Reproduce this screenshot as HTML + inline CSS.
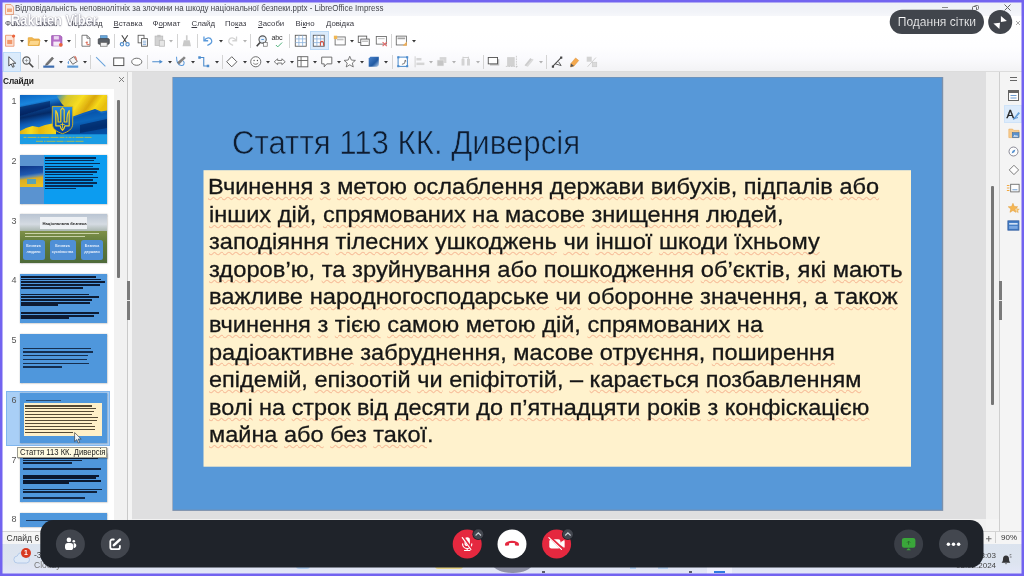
<!DOCTYPE html>
<html lang="uk"><head><meta charset="utf-8"><title>screen</title>
<style>
html,body{margin:0;padding:0;}
body{width:1024px;height:576px;overflow:hidden;background:#fff;font-family:"Liberation Sans",sans-serif;position:relative;}
#root{position:absolute;left:0;top:0;width:1024px;height:576px;overflow:hidden;background:#fbfbfd;}
#app{position:absolute;left:0;top:0;width:1024px;height:576px;filter:blur(.4px);background:#fbfbfd;}
#ov{position:absolute;left:0;top:0;width:1024px;height:576px;filter:blur(.15px);}
.abs{position:absolute;}
.ic{position:absolute;overflow:visible;}
#app .ic{opacity:.9;}
.sep{position:absolute;width:1px;height:14px;background:#d4d4d4;}
.hl{position:absolute;background:#dbebfb;border:1px solid #bcdaf6;box-sizing:border-box;}
.abc{position:absolute;font-size:7.200px;color:#333;letter-spacing:-.2px;}
#titlebar{left:0;top:0;width:1024px;height:15.600px;background:linear-gradient(#eef0f8,#f1f3f8 70%,#f6f7fb);}
#ttext{left:14.600px;top:3.700px;font-size:8.200px;color:#44464e;white-space:nowrap;transform-origin:0 0;transform:scaleX(0.9718);}
#menubar{left:0;top:15.600px;width:1024px;height:14.400px;background:#fff;}
.mi{position:absolute;top:19px;font-size:7.800px;color:#3a3a42;white-space:nowrap;}
#tbars{left:0;top:30px;width:1024px;height:40.500px;background:linear-gradient(#fff,#fefeff 40%,#fafafd 70%,#f3f3f5);}
#tbline{left:0;top:70.500px;width:1024px;height:1px;background:#dcdcdc;}
#work{left:132px;top:71.500px;width:854px;height:447px;background:#dfdfe0;}
#panelhead{left:0;top:71.500px;width:127px;height:17px;background:#f1f1f1;}
#panel{left:0;top:88.500px;width:114px;height:441.500px;background:#fff;}
#panelsb{left:114px;top:88.500px;width:13px;height:442px;background:#f1f1f1;}
#split{left:127px;top:71.500px;width:5px;height:459px;background:#f4f4f4;border-left:1px solid #c9c9c9;box-sizing:border-box;}
#slide{left:172.700px;top:77.300px;width:770.300px;height:433px;background:#5798d8;box-shadow:0 0 0 .5px #8a8a8a;}
#tbox{left:203.400px;top:170.300px;width:707.600px;height:296.400px;background:#fff2cd;}
.bl{position:absolute;left:209.8px;font-size:22.8px;line-height:1;color:#161616;white-space:nowrap;transform-origin:0 0;-webkit-text-stroke:.3px #161616;}
.bl u{text-decoration:underline wavy rgba(230,80,50,.32);text-decoration-thickness:.5px;text-underline-offset:2.200px;text-decoration-skip-ink:none;}
#ttl{color:#0e1c30 !important;left:232.37px;top:126.77px;font-size:32.400px;line-height:1;color:#15253a;white-space:nowrap;transform-origin:0 0;transform:scaleX(0.9627);-webkit-text-stroke:.55px #5899d8;}
.tn{position:absolute;left:19.500px;width:87px;height:49.300px;background:#4f97dc;box-shadow:0 0 1.500px .5px rgba(60,60,60,.55);overflow:hidden;}
.num{position:absolute;left:5px;width:11.500px;text-align:right;font-size:9px;color:#555;}
.tl{position:absolute;background:#10203a;opacity:.8;height:1px;}
#status{left:0;top:530.500px;width:1024px;height:13.500px;background:#f5f5f5;}
#hsb{left:132px;top:518.500px;width:867px;height:12px;background:#f1f1f1;}
#task{left:0;top:544px;width:1024px;height:32px;background:linear-gradient(#dbe3ee,#dde4f0 60%,#e4e7fa);}
#side{left:986px;top:71.500px;width:38px;height:459px;background:#f4f4f4;}
#bar{left:40.300px;top:520px;width:943.300px;height:47.700px;background:#1f232a;border-radius:14px;}
.cb{position:absolute;border-radius:50%;width:29px;height:29px;}
#pill{left:889.700px;top:9.700px;width:94.300px;height:24.300px;color:#fff;font-size:12.050px;line-height:24.300px;-webkit-text-stroke:.2px #41454c;text-align:center;white-space:nowrap;}
</style></head><body>
<div id="root">
<div id="app">
<div class="abs" id="titlebar"></div>
<div class="abs" id="menubar"></div>
<div class="abs" id="tbars"></div>
<div class="abs" id="tbline"></div>
<svg class="ic" style="left:5px;top:4px;width:9px;height:11px" viewBox="0 0 9 11"><path d="M.5.500h5.500l2.500 2.500v7.500h-8z" fill="#fde9dc" stroke="#e58a5e" stroke-width=".8"/><rect x="2" y="4.500" width="5" height="3.500" fill="#f2a071"/></svg>
<div class="abs" id="ttext">Відповідальність неповнолітніх за злочини на шкоду національної безпеки.pptx - LibreOffice Impress</div>
<div class="mi" style="left:5px">Файл</div>
<div class="mi" style="left:37px">Зміни</div>
<div class="mi" style="left:68px">Перегляд</div>
<div class="mi" style="left:113.500px"><u>В</u>ставка</div>
<div class="mi" style="left:152.500px">Ф<u>о</u>рмат</div>
<div class="mi" style="left:191.500px"><u>С</u>лайд</div>
<div class="mi" style="left:225px">По<u>к</u>аз</div>
<div class="mi" style="left:258px"><u>З</u>асоби</div>
<div class="mi" style="left:295.500px">Ві<u>к</u>но</div>
<div class="mi" style="left:326px"><u>Д</u>овідка</div>

<svg class="ic" style="left:3.2px;top:33.8px;width:13.5px;height:13.5px" viewBox="0 0 16 16" ><path d="M3 1.5h7l3 3v10H3z" fill="#fbe3d6" stroke="#e8855a"/><rect x="5" y="7" width="6" height="5" fill="#f08c5a"/><circle cx="12.5" cy="2.5" r="2" fill="#e8552a"/></svg>
<svg class="ic" style="left:20.0px;top:39.7px;width:4px;height:2.500px" viewBox="0 0 5 3"><path d="M0 0h5L2.5 3z" fill="#222"/></svg>
<svg class="ic" style="left:27.2px;top:33.8px;width:13.5px;height:13.5px" viewBox="0 0 16 16" ><path d="M1.5 4.5h5l1.5 1.5h6.5v7.5h-13z" fill="#f5b544" stroke="#e09a22"/><path d="M1.5 13.5l2-6h12l-2 6z" fill="#fcd382" stroke="#e09a22" stroke-width=".8"/></svg>
<svg class="ic" style="left:44.0px;top:39.7px;width:4px;height:2.500px" viewBox="0 0 5 3"><path d="M0 0h5L2.5 3z" fill="#222"/></svg>
<svg class="ic" style="left:50.2px;top:33.8px;width:13.5px;height:13.5px" viewBox="0 0 16 16" ><path d="M2 2h10.5L14 3.5V14H2z" fill="#b05fc4" stroke="#8e3fa6"/><rect x="4.5" y="2.5" width="6" height="4" fill="#e9d3f0"/><rect x="4" y="9" width="8" height="5" fill="#f3e8f7"/><circle cx="12.8" cy="12.8" r="2.2" fill="#e8552a"/></svg>
<svg class="ic" style="left:67.0px;top:39.7px;width:4px;height:2.500px" viewBox="0 0 5 3"><path d="M0 0h5L2.5 3z" fill="#222"/></svg>
<div class="sep" style="left:75.0px;top:33.5px"></div>
<svg class="ic" style="left:79.2px;top:33.8px;width:13.5px;height:13.5px" viewBox="0 0 16 16" ><path d="M3.5 1.5h6l3.5 3.5v9.5h-9.500z" fill="#fff" stroke="#555"/><path d="M9.5 1.500v3.500h3.500" fill="none" stroke="#555"/><path d="M8 10.500c1.500-2 2.500-1 1.500 0.500s1.500 2.500 3 1" stroke="#d8604a" fill="none" stroke-width="1.200"/></svg>
<svg class="ic" style="left:97.2px;top:33.8px;width:13.5px;height:13.5px" viewBox="0 0 16 16" ><rect x="4" y="2" width="8" height="4" fill="#5aa0d8" stroke="#3a70a8" stroke-width=".8"/><rect x="1.500" y="5.500" width="13" height="6.500" rx="1" fill="#4a4f57" stroke="#2e3238"/><rect x="4" y="10" width="8" height="4.500" fill="#f0f0f0" stroke="#555" stroke-width=".8"/></svg>
<div class="sep" style="left:114.0px;top:33.5px"></div>
<svg class="ic" style="left:118.2px;top:33.8px;width:13.5px;height:13.5px" viewBox="0 0 16 16" ><path d="M4.500 1.500L10 10M11.500 1.500L6 10" stroke="#333" stroke-width="1.300" fill="none"/><circle cx="4.700" cy="12.200" r="2" fill="none" stroke="#3c7fc4" stroke-width="1.300"/><circle cx="11.300" cy="12.200" r="2" fill="none" stroke="#3c7fc4" stroke-width="1.300"/></svg>
<svg class="ic" style="left:136.2px;top:33.8px;width:13.5px;height:13.5px" viewBox="0 0 16 16" ><rect x="2.500" y="1.500" width="7" height="9" fill="#fff" stroke="#444"/><rect x="6.500" y="5.500" width="7" height="9" fill="#fff" stroke="#444"/><path d="M8 8.500h4M8 10.500h4M8 12.500h4" stroke="#4a86c8" stroke-width=".8"/></svg>
<svg class="ic" style="left:153.2px;top:33.8px;width:13.5px;height:13.5px" viewBox="0 0 16 16" ><rect x="2.500" y="2.500" width="9" height="11" fill="#cfcfcf" stroke="#b5b5b5"/><rect x="5" y="1" width="4" height="3" fill="#bdbdbd"/><rect x="7.500" y="7.500" width="6" height="7" fill="#e4e4e4" stroke="#b5b5b5"/></svg>
<svg class="ic" style="left:169.0px;top:39.7px;width:4px;height:2.500px" viewBox="0 0 5 3"><path d="M0 0h5L2.5 3z" fill="#aaa"/></svg>
<div class="sep" style="left:177.0px;top:33.5px"></div>
<svg class="ic" style="left:180.2px;top:33.8px;width:13.5px;height:13.5px" viewBox="0 0 16 16" ><path d="M7 1.500h2v6h-2z" fill="#c8c8c8"/><path d="M4.500 7.500h7l1.500 7h-10z" fill="#c4c4c4"/></svg>
<div class="sep" style="left:197.0px;top:33.5px"></div>
<svg class="ic" style="left:201.2px;top:33.8px;width:13.5px;height:13.5px" viewBox="0 0 16 16" ><path d="M3.500 3v5h5" fill="none" stroke="#4a90d8" stroke-width="1.500"/><path d="M3.800 7.800C6 4 11 3.500 12.500 7c1.200 3-1.500 5.500-5 6.500" fill="none" stroke="#4a90d8" stroke-width="1.500"/></svg>
<svg class="ic" style="left:219.0px;top:39.7px;width:4px;height:2.500px" viewBox="0 0 5 3"><path d="M0 0h5L2.5 3z" fill="#222"/></svg>
<svg class="ic" style="left:226.2px;top:33.8px;width:13.5px;height:13.5px" viewBox="0 0 16 16" ><path d="M12.500 3v5h-5" fill="none" stroke="#cfcfcf" stroke-width="1.500"/><path d="M12.200 7.800C10 4 5 3.500 3.500 7c-1.200 3 1.500 5.500 5 6.500" fill="none" stroke="#cfcfcf" stroke-width="1.500"/></svg>
<svg class="ic" style="left:243.0px;top:39.7px;width:4px;height:2.500px" viewBox="0 0 5 3"><path d="M0 0h5L2.5 3z" fill="#aaa"/></svg>
<div class="sep" style="left:250.0px;top:33.5px"></div>
<svg class="ic" style="left:255.2px;top:33.8px;width:13.5px;height:13.5px" viewBox="0 0 16 16" ><circle cx="9" cy="6.500" r="4.300" fill="#e6f0fa" stroke="#444" stroke-width="1.300"/><path d="M6 10L2 14.500" stroke="#333" stroke-width="2"/><path d="M7.500 6.500h3" stroke="#4a90d8" stroke-width="1.200"/><rect x="10" y="10" width="4.500" height="4.500" fill="#fff" stroke="#555" stroke-width=".8"/></svg>
<div class="abc" style="left:271.500px;top:32.5px">abc</div>
<svg class="ic" style="left:274.0px;top:39.5px;width:10px;height:10px" viewBox="0 0 16 16" ><path d="M3 8l3 3 7-7" fill="none" stroke="#3aa86a" stroke-width="1.600"/></svg>
<div class="sep" style="left:289.0px;top:33.5px"></div>
<svg class="ic" style="left:294.2px;top:33.8px;width:13.5px;height:13.5px" viewBox="0 0 16 16" ><rect x="1.500" y="1.500" width="13" height="13" fill="#fff" stroke="#444"/><path d="M5.800 1.500v13M10.200 1.500v13M1.500 5.800h13M1.500 10.200h13" stroke="#7aa6d8" stroke-width=".9"/></svg>
<div class="hl" style="left:310px;top:31.0px;width:18.500px;height:19px"></div>
<svg class="ic" style="left:312.2px;top:33.8px;width:13.5px;height:13.5px" viewBox="0 0 16 16" ><rect x="1.500" y="1.500" width="13" height="13" fill="#fff" stroke="#444"/><path d="M5.800 1.500v13M10.200 1.500v13M1.500 5.800h13M1.500 10.200h13" stroke="#7aa6d8" stroke-width=".9"/><path d="M10 14v-3.500a1.800 1.800 0 013.600 0V14" stroke="#d8402a" fill="none" stroke-width="1.300"/></svg>
<svg class="ic" style="left:333.2px;top:33.8px;width:13.5px;height:13.5px" viewBox="0 0 16 16" ><rect x="2.500" y="3.500" width="12" height="9.500" fill="#fff" stroke="#555"/><rect x="4.500" y="5.500" width="8" height="2" fill="#bbb"/><rect x="1" y="2" width="4" height="4" fill="#f0b040"/></svg>
<svg class="ic" style="left:350.0px;top:39.7px;width:4px;height:2.500px" viewBox="0 0 5 3"><path d="M0 0h5L2.5 3z" fill="#222"/></svg>
<svg class="ic" style="left:357.2px;top:33.8px;width:13.5px;height:13.5px" viewBox="0 0 16 16" ><rect x="1.500" y="2.500" width="10" height="7.500" fill="#fff" stroke="#444"/><rect x="4.500" y="6" width="10" height="7.500" fill="#fff" stroke="#444"/><path d="M6 8.500h7" stroke="#888"/></svg>
<svg class="ic" style="left:374.8px;top:33.8px;width:13.5px;height:13.5px" viewBox="0 0 16 16" ><rect x="1.500" y="3" width="12" height="9" fill="#fff" stroke="#555"/><path d="M3.500 5.500h8" stroke="#aaa"/><path d="M9 9.500l5 5M14 9.500l-5 5" stroke="#e05a5a" stroke-width="1.300"/></svg>
<div class="sep" style="left:391.0px;top:33.5px"></div>
<svg class="ic" style="left:395.2px;top:33.8px;width:13.5px;height:13.5px" viewBox="0 0 16 16" ><rect x="1.500" y="2.500" width="12" height="10.500" fill="#fff" stroke="#555"/><rect x="3" y="4.200" width="9" height="2" fill="#999"/><path d="M9 14l5-5v5z" fill="#f0a848"/></svg>
<svg class="ic" style="left:412.0px;top:39.7px;width:4px;height:2.500px" viewBox="0 0 5 3"><path d="M0 0h5L2.5 3z" fill="#222"/></svg>
<div class="hl" style="left:3px;top:51.5px;width:17.500px;height:20px"></div>
<svg class="ic" style="left:4.8px;top:54.8px;width:13.5px;height:13.5px" viewBox="0 0 16 16" ><path d="M4.500 2v11l2.800-2.500 1.800 4 1.800-.8-1.800-3.900h3.700z" fill="#fff" stroke="#333" stroke-width="1.100" stroke-linejoin="round"/></svg>
<svg class="ic" style="left:21.2px;top:54.8px;width:13.5px;height:13.5px" viewBox="0 0 16 16" ><circle cx="6.500" cy="6.500" r="4.300" fill="#eef4fa" stroke="#444" stroke-width="1.300"/><path d="M9.800 9.800L14.500 14.500" stroke="#333" stroke-width="2"/><path d="M4.500 6.500h4M6.500 4.500v4" stroke="#888" stroke-width=".9"/></svg>
<div class="sep" style="left:38.0px;top:54.5px"></div>
<svg class="ic" style="left:42.2px;top:54.8px;width:13.5px;height:13.5px" viewBox="0 0 16 16" ><path d="M5 10l7-7.500 1.800 1.600L7 11.500l-3 .8z" fill="#666" stroke="#444" stroke-width=".6"/><rect x="1.500" y="12.500" width="13" height="2.600" fill="#2a5fa8"/></svg>
<svg class="ic" style="left:59.0px;top:60.7px;width:4px;height:2.500px" viewBox="0 0 5 3"><path d="M0 0h5L2.5 3z" fill="#222"/></svg>
<svg class="ic" style="left:66.2px;top:54.8px;width:13.5px;height:13.5px" viewBox="0 0 16 16" ><path d="M4 5.500l5-3.500 4.500 5.500-5.500 3.500z" fill="#f4f4f4" stroke="#444" stroke-width="1"/><path d="M10 1.500c2 1 2.500 3 2 5" stroke="#d8604a" fill="none" stroke-width="1.200"/><path d="M3.500 7c-1.500 1.500-1.500 3 0 3.500" fill="#4a90d8" stroke="#4a90d8"/><rect x="1.500" y="12.500" width="13" height="2.600" fill="#4a8fd4"/></svg>
<svg class="ic" style="left:83.0px;top:60.7px;width:4px;height:2.500px" viewBox="0 0 5 3"><path d="M0 0h5L2.5 3z" fill="#222"/></svg>
<div class="sep" style="left:90.0px;top:54.5px"></div>
<svg class="ic" style="left:94.2px;top:54.8px;width:13.5px;height:13.5px" viewBox="0 0 16 16" ><path d="M2.500 2.500l11 11" stroke="#5a9ad8" stroke-width="1.200"/></svg>
<svg class="ic" style="left:112.2px;top:54.8px;width:13.5px;height:13.5px" viewBox="0 0 16 16" ><rect x="2" y="3.500" width="12" height="9" fill="#fff" stroke="#444" stroke-width="1.200"/></svg>
<svg class="ic" style="left:130.2px;top:54.8px;width:13.5px;height:13.5px" viewBox="0 0 16 16" ><ellipse cx="8" cy="8" rx="6" ry="4.200" fill="#fff" stroke="#555" stroke-width="1.100"/></svg>
<div class="sep" style="left:147.0px;top:54.5px"></div>
<svg class="ic" style="left:151.2px;top:54.8px;width:13.5px;height:13.5px" viewBox="0 0 16 16" ><path d="M1.500 8h10" stroke="#3a80c8" stroke-width="1.200"/><path d="M10 5.500l4 2.500-4 2.500z" fill="#3a80c8"/></svg>
<svg class="ic" style="left:168.0px;top:60.7px;width:4px;height:2.500px" viewBox="0 0 5 3"><path d="M0 0h5L2.5 3z" fill="#222"/></svg>
<svg class="ic" style="left:174.2px;top:54.8px;width:13.5px;height:13.5px" viewBox="0 0 16 16" ><path d="M3 2c0 6 2 10 5.500 10.500S13 9 11 7" fill="none" stroke="#4a90d8" stroke-width="1.200"/><path d="M4 9l8-7 1.500 1.500L6 11z" fill="#777" stroke="#444" stroke-width=".5"/></svg>
<svg class="ic" style="left:191.0px;top:60.7px;width:4px;height:2.500px" viewBox="0 0 5 3"><path d="M0 0h5L2.5 3z" fill="#222"/></svg>
<svg class="ic" style="left:197.2px;top:54.8px;width:13.5px;height:13.5px" viewBox="0 0 16 16" ><path d="M3 3h5v10h5" fill="none" stroke="#3a80c8" stroke-width="1.300"/><rect x="1.500" y="1.500" width="3" height="3" fill="#3a80c8"/><rect x="11.500" y="11.500" width="3" height="3" fill="#3a80c8"/></svg>
<svg class="ic" style="left:215.0px;top:60.7px;width:4px;height:2.500px" viewBox="0 0 5 3"><path d="M0 0h5L2.5 3z" fill="#222"/></svg>
<div class="sep" style="left:222.0px;top:54.5px"></div>
<svg class="ic" style="left:225.2px;top:54.8px;width:13.5px;height:13.5px" viewBox="0 0 16 16" ><path d="M8 2l6 6-6 6-6-6z" fill="#fff" stroke="#444" stroke-width="1.100"/></svg>
<svg class="ic" style="left:243.0px;top:60.7px;width:4px;height:2.500px" viewBox="0 0 5 3"><path d="M0 0h5L2.5 3z" fill="#222"/></svg>
<svg class="ic" style="left:249.2px;top:54.8px;width:13.5px;height:13.5px" viewBox="0 0 16 16" ><circle cx="8" cy="8" r="6" fill="#fff" stroke="#555" stroke-width="1.100"/><circle cx="6" cy="6.500" r=".8" fill="#444"/><circle cx="10" cy="6.500" r=".8" fill="#444"/><path d="M5 9.500c1.500 2 4.500 2 6 0" stroke="#444" fill="none" stroke-width=".9"/></svg>
<svg class="ic" style="left:266.0px;top:60.7px;width:4px;height:2.500px" viewBox="0 0 5 3"><path d="M0 0h5L2.5 3z" fill="#222"/></svg>
<svg class="ic" style="left:272.8px;top:54.8px;width:13.5px;height:13.5px" viewBox="0 0 16 16" ><path d="M1.500 8l4-3.500v2h5v-2l4 3.500-4 3.500v-2h-5v2z" fill="#fff" stroke="#555" stroke-width="1"/></svg>
<svg class="ic" style="left:289.5px;top:60.7px;width:4px;height:2.500px" viewBox="0 0 5 3"><path d="M0 0h5L2.5 3z" fill="#222"/></svg>
<svg class="ic" style="left:296.2px;top:54.8px;width:13.5px;height:13.5px" viewBox="0 0 16 16" ><rect x="2" y="2" width="12" height="12" fill="#fff" stroke="#555" stroke-width="1.100"/><path d="M6 2v12M2 6.500h12" stroke="#555" stroke-width="1.100"/></svg>
<svg class="ic" style="left:313.0px;top:60.7px;width:4px;height:2.500px" viewBox="0 0 5 3"><path d="M0 0h5L2.5 3z" fill="#222"/></svg>
<svg class="ic" style="left:320.2px;top:54.8px;width:13.5px;height:13.5px" viewBox="0 0 16 16" ><path d="M2 2.500h12v8H8l-3 3.500v-3.500H2z" fill="#fff" stroke="#555" stroke-width="1.100" stroke-linejoin="round"/></svg>
<svg class="ic" style="left:337.0px;top:60.7px;width:4px;height:2.500px" viewBox="0 0 5 3"><path d="M0 0h5L2.5 3z" fill="#222"/></svg>
<svg class="ic" style="left:343.2px;top:54.8px;width:13.5px;height:13.5px" viewBox="0 0 16 16" ><path d="M8 1.500l1.900 4.500 4.800.4-3.700 3.100 1.200 4.700L8 11.600l-4.200 2.600L5 9.500 1.300 6.400l4.800-.4z" fill="#fff" stroke="#555" stroke-width="1" stroke-linejoin="round"/></svg>
<svg class="ic" style="left:360.0px;top:60.7px;width:4px;height:2.500px" viewBox="0 0 5 3"><path d="M0 0h5L2.5 3z" fill="#222"/></svg>
<svg class="ic" style="left:366.8px;top:54.8px;width:13.5px;height:13.5px" viewBox="0 0 16 16" ><defs><linearGradient id="g3d" x1="0" y1="0" x2="1" y2="1"><stop offset="0" stop-color="#3a78c8"/><stop offset=".6" stop-color="#0a4a9a"/><stop offset="1" stop-color="#bcd4f0"/></linearGradient></defs><path d="M4 2h10v10l-2 2H2V4z" fill="url(#g3d)"/></svg>
<svg class="ic" style="left:384.0px;top:60.7px;width:4px;height:2.500px" viewBox="0 0 5 3"><path d="M0 0h5L2.5 3z" fill="#222"/></svg>
<div class="sep" style="left:392.0px;top:54.5px"></div>
<svg class="ic" style="left:396.2px;top:54.8px;width:13.5px;height:13.5px" viewBox="0 0 16 16" ><rect x="2.500" y="2.500" width="11" height="11" fill="#fff" stroke="#3a80c8" stroke-width="1.200"/><path d="M7 11a4 4 0 004-4" stroke="#555" fill="none"/><path d="M9.500 7.500L11 5.500l1.500 2z" fill="#555"/><rect x="1.500" y="1.500" width="2.500" height="2.500" fill="#3a80c8"/><rect x="12" y="1.500" width="2.500" height="2.500" fill="#3a80c8"/><rect x="1.500" y="12" width="2.500" height="2.500" fill="#3a80c8"/><rect x="12" y="12" width="2.500" height="2.500" fill="#3a80c8"/></svg>
<svg class="ic" style="left:413.2px;top:54.8px;width:13.5px;height:13.5px" viewBox="0 0 16 16" ><path d="M2.500 1.500v13" stroke="#c4c4c4"/><rect x="4" y="3.500" width="6" height="3" fill="#d2d2d2"/><rect x="4" y="9" width="9.500" height="3" fill="#d2d2d2"/></svg>
<svg class="ic" style="left:429.0px;top:60.7px;width:4px;height:2.500px" viewBox="0 0 5 3"><path d="M0 0h5L2.5 3z" fill="#aaa"/></svg>
<svg class="ic" style="left:435.2px;top:54.8px;width:13.5px;height:13.5px" viewBox="0 0 16 16" ><rect x="5.500" y="2.500" width="8" height="7" fill="#d2d2d2"/><rect x="2.500" y="6" width="8" height="7" fill="#c0c0c0" stroke="#e8e8e8" stroke-width=".6"/></svg>
<svg class="ic" style="left:452.0px;top:60.7px;width:4px;height:2.500px" viewBox="0 0 5 3"><path d="M0 0h5L2.5 3z" fill="#aaa"/></svg>
<svg class="ic" style="left:459.2px;top:54.8px;width:13.5px;height:13.5px" viewBox="0 0 16 16" ><rect x="3" y="4.500" width="3.500" height="8" fill="#d0d0d0"/><rect x="9.500" y="4.500" width="3.500" height="8" fill="#d0d0d0"/><path d="M4.700 2v3M11.200 2v3M4.700 3h6.500" stroke="#c4c4c4" fill="none"/></svg>
<svg class="ic" style="left:476.0px;top:60.7px;width:4px;height:2.500px" viewBox="0 0 5 3"><path d="M0 0h5L2.5 3z" fill="#aaa"/></svg>
<div class="sep" style="left:482.5px;top:54.5px"></div>
<svg class="ic" style="left:487.2px;top:54.8px;width:13.5px;height:13.5px" viewBox="0 0 16 16" ><rect x="3.500" y="5" width="11" height="7.500" fill="#b8b8b8"/><rect x="1.500" y="3" width="11" height="7.500" fill="#fff" stroke="#444" stroke-width="1.100"/></svg>
<svg class="ic" style="left:505.2px;top:54.8px;width:13.5px;height:13.5px" viewBox="0 0 16 16" ><rect x="2.500" y="2.500" width="9" height="11" fill="#cdcdcd"/><path d="M13.500 1v14M1 13.500h14" stroke="#c0c0c0" stroke-dasharray="2 1"/></svg>
<svg class="ic" style="left:521.8px;top:54.8px;width:13.5px;height:13.5px" viewBox="0 0 16 16" ><path d="M3 12l7-8.500 2 1.700-7 8.500z" fill="#c8c8c8"/><path d="M6 13.500l7-8.500" stroke="#d8d8d8" stroke-width="2"/></svg>
<svg class="ic" style="left:539.0px;top:60.7px;width:4px;height:2.500px" viewBox="0 0 5 3"><path d="M0 0h5L2.5 3z" fill="#aaa"/></svg>
<div class="sep" style="left:546.0px;top:54.5px"></div>
<svg class="ic" style="left:550.8px;top:54.8px;width:13.5px;height:13.5px" viewBox="0 0 16 16" ><path d="M2 13.500L12 3" stroke="#333" stroke-width="1.200"/><path d="M5 10.500l7 2-3-4.500" fill="none" stroke="#333" stroke-width="1"/><rect x="10.800" y="1.800" width="2.600" height="2.600" fill="#333"/><rect x="1" y="12.500" width="2.600" height="2.600" fill="#333"/></svg>
<svg class="ic" style="left:568.2px;top:54.8px;width:13.5px;height:13.5px" viewBox="0 0 16 16" ><path d="M3.500 10l5.500-6.500 3.700 3-5.500 6.500-4.200 1.300z" fill="#f4a03a" stroke="#d88420" stroke-width=".6"/><path d="M3.500 10l3.700 3-4.200 1.300z" fill="#444"/></svg>
<svg class="ic" style="left:585.2px;top:54.8px;width:13.5px;height:13.5px" viewBox="0 0 16 16" ><rect x="2" y="2" width="6" height="6" fill="#cfcfcf"/><rect x="8.500" y="8.500" width="5.500" height="5.500" fill="#d8d8d8" stroke="#c0c0c0" stroke-width=".6"/><path d="M3 14L13 3" stroke="#c4c4c4"/></svg>
<div class="abs" style="left:941.500px;top:6.500px;width:6.500px;height:1px;background:#8a8a8a"></div>
<div class="abs" style="left:973.500px;top:4.500px;width:5px;height:5px;border:1px solid #777;border-radius:1.500px;box-sizing:border-box"></div>
<div class="abs" style="left:972px;top:6px;width:5px;height:5px;border:1px solid #666;border-radius:1.500px;box-sizing:border-box;background:#f1f3f8"></div>
<svg class="ic" style="left:1003.500px;top:4px;width:7px;height:7px" viewBox="0 0 7 7"><path d="M.5.500l6 6M6.500.500l-6 6" stroke="#555" stroke-width="1"/></svg>
<svg class="ic" style="left:1016px;top:20.500px;width:4px;height:4px" viewBox="0 0 4 4"><path d="M0 0l4 4M4 0L0 4" stroke="#888" stroke-width=".8"/></svg>

<div class="abs" id="work"></div>
<div class="abs" id="hsb"></div>
<div class="abs" id="panelhead"></div>
<div class="abs" id="panel"></div>
<div class="abs" id="panelsb"></div>
<div class="abs" id="split"></div>
<div class="abs" style="left:3px;top:75.500px;font-size:8.300px;font-weight:bold;color:#222;letter-spacing:-.1px">Слайди</div>
<svg class="ic" style="left:118.500px;top:77px;width:5px;height:5px" viewBox="0 0 5 5"><path d="M0 0l5 5M5 0L0 5" stroke="#666" stroke-width=".9"/></svg>
<div class="abs" style="left:117px;top:99.500px;width:3px;height:178px;background:#767676;border-radius:1px"></div>
<div class="abs" style="left:127px;top:280.500px;width:3px;height:39.500px;background:#7a7a7a"></div>
<div class="abs" style="left:127px;top:299.500px;width:3px;height:1.500px;background:#e8e8e8"></div>
<div class="abs" style="left:5.500px;top:391px;width:104px;height:54.500px;background:#a9cff6;border:1px solid #7fb6ee;box-sizing:border-box"></div>
<div class="num" style="top:96.3px">1</div>
<div class="tn" style="top:94.8px;height:49.3px"><svg class="abs" style="left:0;top:0;width:87px;height:49.300px" viewBox="0 0 87 49.300" preserveAspectRatio="none"><defs><linearGradient id="fb" x1="0" y1="0" x2=".35" y2="1"><stop offset="0" stop-color="#0b63c0"/><stop offset=".18" stop-color="#1a86de"/><stop offset=".3" stop-color="#0a4896"/><stop offset=".42" stop-color="#052a66"/><stop offset=".55" stop-color="#0c5ab4"/><stop offset=".7" stop-color="#1a84dc"/><stop offset=".85" stop-color="#083c88"/><stop offset="1" stop-color="#0b58b0"/></linearGradient><linearGradient id="fy" x1="0" y1="0" x2="1" y2=".3"><stop offset="0" stop-color="#f4d81c" stop-opacity="0"/><stop offset=".22" stop-color="#f2d416" stop-opacity=".85"/><stop offset=".5" stop-color="#f8de22"/><stop offset=".72" stop-color="#d9a70c"/><stop offset=".86" stop-color="#f6d81a"/><stop offset="1" stop-color="#e8bf10"/></linearGradient><linearGradient id="fy2" x1="0" y1="0" x2="1" y2="0"><stop offset="0" stop-color="#e0b010"/><stop offset=".3" stop-color="#f8dc1e"/><stop offset=".55" stop-color="#e6b80e"/><stop offset="1" stop-color="#f6d81a"/></linearGradient><linearGradient id="fs" x1="0" y1="0" x2="0" y2="1"><stop offset="0" stop-color="#2a8fe4"/><stop offset=".5" stop-color="#0f5cb8"/><stop offset="1" stop-color="#0a3f98"/></linearGradient><filter id="fbl" x="-5%" y="-5%" width="110%" height="110%"><feGaussianBlur stdDeviation=".7"/></filter></defs><rect width="87" height="49.300" fill="url(#fb)"/><g filter="url(#fbl)"><path d="M36 0H87V15.600L81 16.500 75 14 63.500 17.700 53 21.400 49 16 42 9z" fill="url(#fy)"/><path d="M0 36L6 33 12.500 31 18.800 32.300 25 30 32.300 28.600 36 30V39.500H0z" fill="url(#fy2)"/><path d="M50 24L64 19.500 76 16 82 18.500 87 17V39.500H50z" fill="#0a4aa0" opacity=".55"/><path d="M60 30l27-6v9l-27 5z" fill="#041f58" opacity=".6"/><path d="M0 12l30-6 0 6-30 9z" fill="#031a4c" opacity=".55"/></g><rect y="39.300" width="87" height="10" fill="#1b9ce4"/><path d="M32.300 11.400h20.400v17.500c0 5-4.500 8-10.200 9.800-5.700-1.800-10.200-4.800-10.200-9.800z" fill="url(#fs)" stroke="#d8b81c" stroke-width=".9"/><path d="M35.800 15.500c1.700 2.500 2.600 6 2.300 11.500h2.700V14.800l1.700-2 1.700 2V27h2.700c-.3-5.500.6-9 2.300-11.500v15.300h-4.300c-.4 2-1.100 3.300-2.400 4.600-1.300-1.300-2-2.600-2.400-4.600h-4.300z" fill="none" stroke="#f0cf24" stroke-width="1.200" stroke-linejoin="round"/><path d="M40.300 29.500h4.400M42.500 27.500v6" stroke="#f0cf24" stroke-width=".8"/><g stroke="#c8c23a" stroke-width="1" opacity=".8"><path d="M3.500 42.400h3M7.500 42.400h9M17.500 42.400h2M20.500 42.400h9M30.500 42.400h8M39.500 42.400h5M45.500 42.400h2M48.500 42.400h3M52.500 42.400h2M55.500 42.400h8M64.500 42.400h7"/><path d="M16 46.300h7M24 46.300h1.500M26.500 46.300h9M36.500 46.300h7M44.500 46.300h1M46.500 46.300h8M55.500 46.300h8"/></g></svg></div>
<div class="num" style="top:156.0px">2</div>
<div class="tn" style="top:154.5px;height:49.3px"><div class="abs" style="left:0;top:0;width:24px;height:49.300px;background:#5a93d0"></div><div class="abs" style="left:24px;top:0;width:63px;height:49.300px;background:#0c9cf0"></div><div class="abs" style="left:0;top:11.500px;width:23.500px;height:21px;background:linear-gradient(172deg,#0d3486 0%,#1d58b0 38%,#5a86b0 48%,#dcae22 60%,#f0c222 100%)"></div><div class="abs" style="left:7px;top:24px;width:9px;height:5px;background:#3aa0d8;opacity:.8"></div><div class="tl" style="left:25.5px;top:2.6px;width:51.0px;height:1.5px;background:#06163a;opacity:0.85"></div><div class="tl" style="left:25.5px;top:5.4px;width:49.0px;height:1.5px;background:#06163a;opacity:0.85"></div><div class="tl" style="left:25.5px;top:8.2px;width:54.9px;height:1.5px;background:#06163a;opacity:0.85"></div><div class="tl" style="left:25.5px;top:11.0px;width:48.1px;height:1.5px;background:#06163a;opacity:0.85"></div><div class="tl" style="left:25.5px;top:13.8px;width:53.5px;height:1.5px;background:#06163a;opacity:0.85"></div><div class="tl" style="left:25.5px;top:16.6px;width:51.5px;height:1.5px;background:#06163a;opacity:0.85"></div><div class="tl" style="left:25.5px;top:19.4px;width:47.9px;height:1.5px;background:#06163a;opacity:0.85"></div><div class="tl" style="left:25.5px;top:22.1px;width:53.2px;height:1.5px;background:#06163a;opacity:0.85"></div><div class="tl" style="left:25.5px;top:24.9px;width:47.6px;height:1.5px;background:#06163a;opacity:0.85"></div><div class="tl" style="left:25.5px;top:27.7px;width:52.3px;height:1.5px;background:#06163a;opacity:0.85"></div><div class="tl" style="left:25.5px;top:30.5px;width:48.0px;height:1.5px;background:#06163a;opacity:0.85"></div><div class="tl" style="left:25.5px;top:33.3px;width:30.7px;height:1.5px;background:#06163a;opacity:0.85"></div></div>
<div class="num" style="top:215.7px">3</div>
<div class="tn" style="top:214.2px;height:49.3px"><div class="abs" style="left:0;top:0;width:87px;height:17px;background:linear-gradient(#b9c4d2,#d5dbe2 60%,#aab6b0)"></div><div class="abs" style="left:0;top:17px;width:87px;height:32.300px;background:linear-gradient(#7f9048,#5f7a3a 40%,#4e6a3a)"></div><div class="abs" style="left:20px;top:3px;width:47px;height:12px;background:#eef1f5"></div><div class="abs" style="left:23px;top:6.500px;width:42px;font-size:4.200px;font-weight:bold;color:#222;text-align:center;white-space:nowrap;line-height:5px">Національна безпека</div><div class="tl" style="left:5.0px;top:19.0px;width:74.6px;height:1.0px;background:#e4e8c8;opacity:0.75"></div><div class="tl" style="left:5.0px;top:21.5px;width:60.9px;height:1.0px;background:#e4e8c8;opacity:0.75"></div><div class="abs" style="left:3px;top:25.500px;width:22px;height:20px;border-radius:2.500px;background:#4f8fd6;color:#e6eefa;font-size:3.600px;font-weight:bold;text-align:center;line-height:5.500px;padding-top:4.500px;box-sizing:border-box">Безпека<br>людини</div><div class="abs" style="left:30px;top:25.500px;width:26px;height:20px;border-radius:2.500px;background:#4f8fd6;color:#e6eefa;font-size:3.600px;font-weight:bold;text-align:center;line-height:5.500px;padding-top:4.500px;box-sizing:border-box">Безпека<br>суспільства</div><div class="abs" style="left:61.5px;top:25.500px;width:22px;height:20px;border-radius:2.500px;background:#4f8fd6;color:#e6eefa;font-size:3.600px;font-weight:bold;text-align:center;line-height:5.500px;padding-top:4.500px;box-sizing:border-box">Безпека<br>держави</div></div>
<div class="num" style="top:275.4px">4</div>
<div class="tn" style="top:273.9px;height:49.3px"><div class="tl" style="left:1.0px;top:2.0px;width:75.1px;height:1.8px;background:#050d20;opacity:0.9"></div><div class="tl" style="left:1.0px;top:4.7px;width:80.2px;height:1.8px;background:#050d20;opacity:0.9"></div><div class="tl" style="left:1.0px;top:7.4px;width:84.3px;height:1.8px;background:#050d20;opacity:0.9"></div><div class="tl" style="left:1.0px;top:10.2px;width:79.6px;height:1.8px;background:#050d20;opacity:0.9"></div><div class="tl" style="left:1.0px;top:12.9px;width:62.9px;height:1.8px;background:#050d20;opacity:0.9"></div><div class="tl" style="left:1.0px;top:19.8px;width:68.6px;height:1.8px;background:#050d20;opacity:0.9"></div><div class="tl" style="left:1.0px;top:22.5px;width:78.3px;height:1.8px;background:#050d20;opacity:0.9"></div><div class="tl" style="left:1.0px;top:25.2px;width:71.5px;height:1.8px;background:#050d20;opacity:0.9"></div><div class="tl" style="left:1.0px;top:27.9px;width:69.7px;height:1.8px;background:#050d20;opacity:0.9"></div><div class="tl" style="left:1.0px;top:30.6px;width:37.9px;height:1.8px;background:#050d20;opacity:0.9"></div><div class="tl" style="left:1.0px;top:38.5px;width:78.5px;height:1.8px;background:#050d20;opacity:0.9"></div><div class="tl" style="left:1.0px;top:41.0px;width:73.4px;height:1.8px;background:#050d20;opacity:0.9"></div><div class="tl" style="left:1.0px;top:43.5px;width:48.4px;height:1.8px;background:#050d20;opacity:0.9"></div></div>
<div class="num" style="top:335.1px">5</div>
<div class="tn" style="top:333.6px;height:49.3px"><div class="tl" style="left:3.5px;top:14.0px;width:67.9px;height:1.3px;background:#08142a;opacity:0.8"></div><div class="tl" style="left:3.5px;top:17.8px;width:69.9px;height:1.3px;background:#08142a;opacity:0.8"></div><div class="tl" style="left:3.5px;top:21.5px;width:64.5px;height:1.3px;background:#08142a;opacity:0.8"></div><div class="tl" style="left:3.5px;top:25.2px;width:64.4px;height:1.3px;background:#08142a;opacity:0.8"></div><div class="tl" style="left:3.5px;top:29.0px;width:66.1px;height:1.3px;background:#08142a;opacity:0.8"></div><div class="tl" style="left:3.5px;top:32.8px;width:39.1px;height:1.3px;background:#08142a;opacity:0.8"></div></div>
<div class="num" style="top:394.8px">6</div>
<div class="tn" style="top:393.3px;height:49.3px"><div class="abs" style="left:4.300px;top:10.100px;width:78.600px;height:33px;background:#fff0c8"></div><div class="abs" style="left:6.800px;top:6.300px;width:35px;height:1.600px;background:#1a2a44;opacity:.7"></div><div class="tl" style="left:5.3px;top:12.0px;width:67.7px;height:1.3px;background:#2a2010;opacity:0.8"></div><div class="tl" style="left:5.3px;top:14.9px;width:70.8px;height:1.3px;background:#2a2010;opacity:0.8"></div><div class="tl" style="left:5.3px;top:17.9px;width:69.3px;height:1.3px;background:#2a2010;opacity:0.8"></div><div class="tl" style="left:5.3px;top:20.9px;width:67.6px;height:1.3px;background:#2a2010;opacity:0.8"></div><div class="tl" style="left:5.3px;top:23.8px;width:73.2px;height:1.3px;background:#2a2010;opacity:0.8"></div><div class="tl" style="left:5.3px;top:26.8px;width:72.1px;height:1.3px;background:#2a2010;opacity:0.8"></div><div class="tl" style="left:5.3px;top:29.7px;width:66.9px;height:1.3px;background:#2a2010;opacity:0.8"></div><div class="tl" style="left:5.3px;top:32.7px;width:70.7px;height:1.3px;background:#2a2010;opacity:0.8"></div><div class="tl" style="left:5.3px;top:35.6px;width:70.1px;height:1.3px;background:#2a2010;opacity:0.8"></div><div class="tl" style="left:5.3px;top:38.5px;width:48.5px;height:1.3px;background:#2a2010;opacity:0.8"></div></div>
<div class="num" style="top:454.5px">7</div>
<div class="tn" style="top:453.0px;height:49.3px"><div class="tl" style="left:3.0px;top:1.5px;width:62.5px;height:1.6px;background:#050d20;opacity:0.85"></div><div class="tl" style="left:3.0px;top:4.1px;width:75.6px;height:1.6px;background:#050d20;opacity:0.85"></div><div class="tl" style="left:3.0px;top:6.8px;width:59.2px;height:1.6px;background:#050d20;opacity:0.85"></div><div class="tl" style="left:3.0px;top:9.4px;width:49.6px;height:1.6px;background:#050d20;opacity:0.85"></div><div class="tl" style="left:3.0px;top:15.0px;width:78.0px;height:1.5px;background:#050d20;opacity:0.8"></div><div class="tl" style="left:3.0px;top:21.5px;width:76.9px;height:2.1px;background:#050d20;opacity:0.92"></div><div class="tl" style="left:3.0px;top:24.1px;width:73.2px;height:2.1px;background:#050d20;opacity:0.92"></div><div class="tl" style="left:3.0px;top:26.8px;width:78.3px;height:2.1px;background:#050d20;opacity:0.92"></div><div class="tl" style="left:3.0px;top:29.4px;width:46.9px;height:2.1px;background:#050d20;opacity:0.92"></div><div class="tl" style="left:3.0px;top:35.5px;width:79.0px;height:1.5px;background:#050d20;opacity:0.85"></div><div class="tl" style="left:3.0px;top:38.1px;width:74.5px;height:1.5px;background:#050d20;opacity:0.85"></div><div class="tl" style="left:3.0px;top:44.3px;width:62.0px;height:1.5px;background:#050d20;opacity:0.8"></div></div>
<div class="num" style="top:514.2px">8</div>
<div class="tn" style="top:512.7px;height:14.2px"><div class="abs" style="left:6px;top:7.300px;width:29px;height:1.500px;background:#0a1830;opacity:.75"></div></div>
<div class="abs" style="left:17.200px;top:446.800px;width:90px;height:11px;background:#fffbe1;border:1px solid #9a9a90;box-sizing:border-box;box-shadow:1px 1px 1px rgba(0,0,0,.25)"></div>
<div class="abs" id="tip" style="left:19.800px;top:447.800px;font-size:8.600px;transform-origin:0 0;transform:scaleX(0.8902);color:#1a1a1a;white-space:nowrap;line-height:9px">Стаття 113 КК. Диверсія</div>
<svg class="ic" style="left:74px;top:432px;width:8px;height:12px" viewBox="0 0 8 12"><path d="M.6.600v9l2.200-2 1.500 3.400 1.400-.6L4.200 7h3z" fill="#fff" stroke="#333" stroke-width=".7" stroke-linejoin="round"/></svg>
<svg class="abs" style="left:0;top:0;width:1024px;height:576px" viewBox="0 0 1024 576"><rect x="172.400" y="77" width="770.800" height="433.900" fill="#7b90ac"/><rect x="173" y="77.600" width="768.800" height="432.100" fill="#5798d8"/><rect x="203.500" y="170.200" width="707.500" height="296.500" fill="#fff2cd"/></svg>
<div class="abs" id="ttl">Стаття 113 КК. Диверсія</div>
<div class="bl" id="b0" style="left:207.95px;top:175.30px;transform:scaleX(1.0330)"><u>Вчинення</u> <u>з</u> <u>метою</u> <u>ослаблення</u> <u>держави</u> <u>вибухів</u>, <u>підпалів</u> <u>або</u></div>
<div class="bl" id="b1" style="left:208.96px;top:202.84px;transform:scaleX(1.0341)"><u>інших</u> <u>дій</u>, <u>спрямованих</u> <u>на</u> <u>масове</u> <u>знищення</u> <u>людей</u>,</div>
<div class="bl" id="b2" style="left:208.99px;top:230.38px;transform:scaleX(1.0353)"><u>заподіяння</u> <u>тілесних</u> <u>ушкоджень</u> <u>чи</u> <u>іншої</u> <u>шкоди</u> <u>їхньому</u></div>
<div class="bl" id="b3" style="left:208.99px;top:257.92px;transform:scaleX(1.0409)"><u>здоров’ю</u>, <u>та</u> <u>зруйнування</u> <u>або</u> <u>пошкодження</u> <u>об’єктів</u>, <u>які</u> <u>мають</u></div>
<div class="bl" id="b4" style="left:208.95px;top:285.46px;transform:scaleX(1.0406)"><u>важливе</u> <u>народногосподарське</u> <u>чи</u> <u>оборонне</u> <u>значення</u>, <u>а</u> <u>також</u></div>
<div class="bl" id="b5" style="left:208.96px;top:313.00px;transform:scaleX(1.0345)"><u>вчинення</u> <u>з</u> <u>тією</u> <u>самою</u> <u>метою</u> <u>дій</u>, <u>спрямованих</u> <u>на</u></div>
<div class="bl" id="b6" style="left:208.95px;top:340.54px;transform:scaleX(1.0344)"><u>радіоактивне</u> <u>забруднення</u>, <u>масове</u> <u>отруєння</u>, <u>поширення</u></div>
<div class="bl" id="b7" style="left:208.96px;top:368.08px;transform:scaleX(1.0311)"><u>епідемій</u>, <u>епізоотій</u> <u>чи</u> <u>епіфітотій</u>, – <u>карається</u> <u>позбавленням</u></div>
<div class="bl" id="b8" style="left:208.96px;top:395.62px;transform:scaleX(1.0280)"><u>волі</u> <u>на</u> <u>строк</u> <u>від</u> <u>десяти</u> <u>до</u> <u>п’ятнадцяти</u> <u>років</u> <u>з</u> <u>конфіскацією</u></div>
<div class="bl" id="b9" style="left:208.96px;top:423.16px;transform:scaleX(1.0316)"><u>майна</u> <u>або</u> <u>без</u> <u>такої</u>.</div>
<div class="abs" id="side"></div>
<div class="abs" style="left:986px;top:71.500px;width:13px;height:447px;background:#f1f1f1"></div>
<div class="abs" style="left:999px;top:71.500px;width:1px;height:459px;background:#cfcfcf"></div>
<div class="abs" style="left:991px;top:185.500px;width:3px;height:219.500px;background:#767676;border-radius:1px"></div>
<div class="abs" style="left:998.500px;top:280.500px;width:3.500px;height:39.500px;background:#7a7a7a"></div>
<div class="abs" style="left:998.500px;top:299.500px;width:3.500px;height:1.500px;background:#e8e8e8"></div>
<div class="abs" style="left:1010px;top:77px;width:6.500px;height:1px;background:#666"></div><div class="abs" style="left:1010px;top:80px;width:6.500px;height:1px;background:#666"></div>
<svg class="ic" style="left:1007px;top:89px;width:13px;height:13px" viewBox="0 0 13 13"><rect x="1.500" y="1.500" width="10" height="10" fill="#fff" stroke="#555"/><rect x="1.500" y="1.500" width="10" height="2.500" fill="#555"/><path d="M3.500 6.500h6M3.500 9h6" stroke="#4a86c8" stroke-width=".9"/></svg>
<div class="abs" style="left:1003.500px;top:104.500px;width:18px;height:18.500px;background:#dcebfb;border:1px solid #cfe3f8;box-sizing:border-box"></div>
<div class="abs" style="left:1006.500px;top:107px;font-size:11.200px;color:#222;line-height:14px;-webkit-text-stroke:.3px #222">A</div>
<svg class="ic" style="left:1012px;top:110px;width:9px;height:10px" viewBox="0 0 9 10"><path d="M1 9l5.500-7L8 3.200 2.500 9.500z" fill="#5a9ad8"/><path d="M1 9.500c1.500-2 3-1 5-2" stroke="#3a78c0" fill="none" stroke-width=".9"/></svg>
<svg class="ic" style="left:1007.5px;top:126.5px;width:11.9px;height:11.9px" viewBox="0 0 14 14"><path d="M1 2.500h4.500l1.200 1.500H13v8.500H1z" fill="#f8c987" stroke="#eaa850" stroke-width=".8"/><rect x="5" y="6.500" width="8" height="6" fill="#4a86c8" stroke="#2f5f98" stroke-width=".6"/><path d="M6 11.500l2-2.500 1.500 1.500 1-1 1.500 2z" fill="#dfeaf6"/></svg>
<svg class="ic" style="left:1008.0px;top:145.5px;width:11.0px;height:11.0px" viewBox="0 0 13 13"><circle cx="6.500" cy="6.500" r="5.300" fill="#fff" stroke="#667" stroke-width="1"/><path d="M8.800 4.200L7.500 7.500 4.200 8.800 5.500 5.500z" fill="#3a80c8"/></svg>
<svg class="ic" style="left:1007.5px;top:164.1px;width:11.9px;height:11.9px" viewBox="0 0 14 14"><path d="M7 1.500L12.500 7 7 12.500 1.500 7z" fill="#fff" stroke="#555" stroke-width="1"/></svg>
<svg class="ic" style="left:1006.2px;top:183.0px;width:13.6px;height:11.0px" viewBox="0 0 16 13"><rect x="5.500" y="1.500" width="10" height="9" fill="#fff" stroke="#555"/><path d="M7.500 8h6" stroke="#4a86c8"/><path d="M1 3h3M1 6h3M1 9h3" stroke="#f0a030" stroke-width="1.200"/></svg>
<svg class="ic" style="left:1006.7px;top:201.6px;width:13.6px;height:11.9px" viewBox="0 0 16 14"><path d="M7 1.500l1.600 3.800 4 .3-3.100 2.600 1 4L7 10l-3.500 2.200 1-4L1.400 5.600l4-.3z" fill="#f6b042" stroke="#e09222" stroke-width=".6"/><path d="M11 6l1 2.300 2.500.2-1.900 1.600.6 2.400-2.200-1.300" fill="#f6c062" stroke="#e09222" stroke-width=".5"/></svg>
<svg class="ic" style="left:1007.1px;top:219.5px;width:12.8px;height:11.0px" viewBox="0 0 15 13"><rect x="1" y="1" width="13" height="11" fill="#2f6fc0" stroke="#1f4f98"/><rect x="2.500" y="3.500" width="10" height="2" fill="#cfe0f5"/><rect x="2.500" y="7" width="10" height="3.500" fill="#6fa0e0"/></svg>

<div class="abs" id="status"></div>
<div class="abs" id="task"></div>
<div class="abs" style="left:0;top:530.500px;width:1024px;height:1px;background:#d4d4d4"></div>
<div class="abs" style="left:6.500px;top:533px;font-size:8.500px;color:#333;white-space:nowrap">Слайд 6 з 23</div>
<div class="abs" style="left:994.500px;top:532px;width:1px;height:11px;background:#d0d0d0"></div>
<svg class="ic" style="left:986px;top:535.500px;width:5.500px;height:5.500px" viewBox="0 0 7 7"><path d="M3.500 0v7M0 3.500h7" stroke="#555" stroke-width="1.200"/></svg>
<div class="abs" style="left:1001px;top:533px;font-size:8px;color:#333;white-space:nowrap">90%</div>
<svg class="ic" style="left:12.500px;top:551px;width:18px;height:13px" viewBox="0 0 18 13"><path d="M4.500 12a3.500 3.500 0 01-.3-7A4.500 4.500 0 0113 5.500a3.200 3.200 0 01.5 6.500z" fill="#dfeaf8" stroke="#a9c3e6" stroke-width=".9"/></svg>
<div class="abs" style="left:21px;top:548px;width:10px;height:10px;border-radius:50%;background:#d83a22;color:#fff;font-size:7px;font-weight:bold;line-height:10px;text-align:center">1</div>
<div class="abs" style="left:34px;top:549.500px;font-size:8.500px;color:#444;white-space:nowrap">-3°C</div>
<div class="abs" style="left:34px;top:560px;font-size:8.500px;color:#777;white-space:nowrap">Cloudy</div>
<div class="abs" style="left:976px;top:550.500px;font-size:8px;color:#444;white-space:nowrap">23:03</div>
<div class="abs" style="left:956px;top:560.500px;font-size:8px;color:#444;white-space:nowrap">03.02.2024</div>
<svg class="ic" style="left:1000.500px;top:554px;width:11px;height:12px" viewBox="0 0 11 12"><path d="M5 1.500c-2 0-3 1.500-3 3.500 0 2-.6 2.800-1.400 3.700h8.800C8.600 7.800 8 7 8 5c0-2-1-3.500-3-3.500z" fill="#222"/><path d="M3.800 9.500a1.300 1.300 0 002.400 0z" fill="#222"/><path d="M8.500 1l1.800-.5M8.800 3h1.800" stroke="#444" stroke-width=".8"/></svg>

<div class="abs" style="left:493px;top:562px;width:38.500px;height:11px;border-radius:0 0 19px 19px/0 0 9px 9px;background:#8e91a5"></div>
<div class="abs" style="left:541.500px;top:571px;width:3px;height:1.500px;background:#5a5e6c"></div>
<div class="abs" style="left:688.500px;top:571px;width:3px;height:1.500px;background:#5a5e6c"></div>
<div class="abs" style="left:707px;top:567px;width:25px;height:7px;background:#eef0fc"></div>
<div class="abs" style="left:714px;top:571px;width:10.500px;height:2px;background:#2f7be0"></div>
<div class="abs" style="left:435px;top:563px;width:28px;height:6px;border-radius:3px;background:#e8cf6a;opacity:.8"></div>
<div class="abs" style="left:296px;top:563px;width:14px;height:6px;border-radius:3px;background:#9cc4ee;opacity:.7"></div>
<div class="abs" style="left:630px;top:565px;width:6px;height:3.500px;background:#9cc4ee;opacity:.7"></div>
<div class="abs" style="left:658px;top:565px;width:10px;height:3.500px;background:#9cc4ee;opacity:.6"></div>

</div>
<div id="ov">
<div class="abs" id="wm" style="left:11.100px;top:12.300px;font-size:14px;transform-origin:0 0;transform:scaleX(0.9119);font-weight:bold;color:#fff;letter-spacing:.1px;white-space:nowrap;text-shadow:0 0 1.500px rgba(70,70,95,.75),0 .5px 1.500px rgba(70,70,95,.5)">Rakuten Viber</div>
<svg class="ic" style="left:20px;top:25.500px;width:22px;height:4px" viewBox="0 0 22 4"><path d="M1 1c5 2.500 12 2.500 19 .5" fill="none" stroke="#fff" stroke-width="1.300" stroke-linecap="round"/></svg>

<svg class="abs" style="left:0;top:0;width:1024px;height:576px" viewBox="0 0 1024 576">
<rect x="40.300" y="520.100" width="943.200" height="47.500" rx="13.500" fill="#1f232a"/>
<g transform="translate(70.4 543.9)"><circle r="14.500" fill="#41454d"/><circle cx="-1.500" cy="-4" r="2.300" fill="#fff"/><rect x="-5.400" y="-.9" width="8.300" height="7.100" rx="2.900" fill="#fff"/><circle cx="3.400" cy="-2.600" r="1.300" fill="#fff"/><path d="M3.300-.9c1.700 0 2.600 1.200 2.600 2.600 0 1.200-.7 2.100-1.700 2.300-.5.100-.9-.2-.9-.7z" fill="#fff"/></g>
<g transform="translate(115.3 543.9)"><circle r="14.500" fill="#41454d"/><path d="M-1.500-4.400H-3a2 2 0 00-2 2v5.700a2 2 0 002 2h5.600a2 2 0 002-2V1.900" fill="none" stroke="#fff" stroke-width="1.800" stroke-linecap="round"/><path d="M-1.400 1.200L4.600-4.300" stroke="#fff" stroke-width="2.600" stroke-linecap="round"/></g>
<g transform="translate(467.2 543.9)"><circle r="14.500" fill="#e5283f"/><rect x="-2.700" y="-6.600" width="5.400" height="8.800" rx="2.700" fill="#fff"/><path d="M-4.600 0a4.600 4.600 0 009.200 0M0 4.600v2M-2.700 6.600h5.400" fill="none" stroke="#fff" stroke-width="1.200" stroke-linecap="round"/><path d="M-4.300-6.900L4.300 5" stroke="#e5283f" stroke-width="2.800"/><path d="M-4.900-6.300L3.700 5.600" stroke="#fff" stroke-width="1.200" stroke-linecap="round"/></g>
<g transform="translate(512.0 543.9)"><circle r="14.500" fill="#fff"/><path d="M-7 .8c0-1.200.6-2.100 1.800-2.700C-3.500-2.700-1.800-3.100 0-3.100s3.500.4 5.200 1.200C6.400-1.300 7-.4 7 .8c0 .7-.4 1.100-1 1.100l-2.300-.4c-.5-.1-.8-.5-.8-1V-.6C2-.9 1-1 0-1s-2 .1-2.900.4V.5c0 .5-.3.900-.8 1l-2.300.4c-.6 0-1-.4-1-1.100z" fill="#e5283f"/></g>
<g transform="translate(556.6 543.9)"><circle r="14.500" fill="#e5283f"/><rect x="-7.300" y="-4.600" width="11.200" height="9.200" rx="2.200" fill="#fff"/><path d="M3.900-1.200L7.600-3.400V3.400L3.900 1.200z" fill="#fff" stroke="#fff" stroke-width=".8" stroke-linejoin="round"/><path d="M-7-7L5.600 4.800" stroke="#e5283f" stroke-width="2.800"/><path d="M-7.700-6.300L4.900 5.500" stroke="#fff" stroke-width="1.200" stroke-linecap="round"/></g>
<g transform="translate(908.6 543.9)"><circle r="14.500" fill="#3a3e46"/><rect x="-6.700" y="-6" width="13.500" height="9.800" rx="2.200" fill="#3aa63a"/><path d="M-1.800 6l1.800-1.500L1.800 6z" fill="#3aa63a" stroke="#3aa63a" stroke-width=".6" stroke-linejoin="round"/><path d="M0 .8V-2.600M-1.500-1.300L0-2.800 1.500-1.300" fill="none" stroke="#2a6a2c" stroke-width="1"/></g>
<g transform="translate(953.5 543.9)"><circle r="14.500" fill="#43474f"/><circle cx="-5.100" cy=".4" r="1.750" fill="#fff"/><circle cx="0" cy=".4" r="1.750" fill="#fff"/><circle cx="5.100" cy=".4" r="1.750" fill="#fff"/></g>
<g transform="translate(478.3 534.200)"><circle r="5.900" fill="#1f232a"/><circle r="5" fill="#43474f"/><path d="M-2.700 1.300L0-1.400l2.700 2.700" fill="none" stroke="#c9cdd3" stroke-width="1.100"/></g>
<g transform="translate(567.9 534.200)"><circle r="5.900" fill="#1f232a"/><circle r="5" fill="#43474f"/><path d="M-2.700 1.300L0-1.400l2.700 2.700" fill="none" stroke="#c9cdd3" stroke-width="1.100"/></g>
</svg>

<svg class="abs" style="left:0;top:0;width:1024px;height:576px" viewBox="0 0 1024 576">
<rect x="889.700" y="9.700" width="94.300" height="24.300" rx="12.150" fill="#41454c"/>
<g transform="translate(1000.200 22.100)"><circle r="12" fill="#41454c"/><path d="M.7-6.200L6.700-1.200.7 0zM-6.800 1.300L-.2.700-.8 6.900z" fill="#fff"/></g>
</svg>

<div class="abs" id="pill">Подання сітки</div>
<svg class="abs" style="left:0;top:0;width:1024px;height:576px;pointer-events:none" viewBox="0 0 1024 576"><rect x="1.250" y="1.250" width="1021.500" height="573.500" fill="none" stroke="#7263f0" stroke-width="2.500"/></svg>
</div>
</div>
</body></html>
